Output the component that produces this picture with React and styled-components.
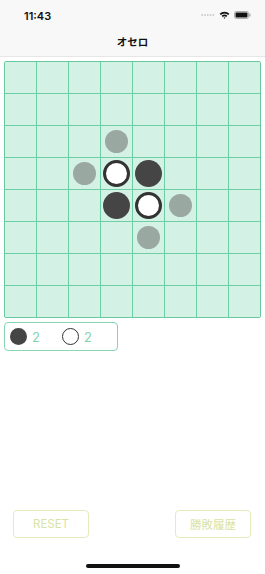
import React from "react";
import styled, { createGlobalStyle } from "styled-components";

const Global = createGlobalStyle`
  html, body { margin: 0; padding: 0; background: #ffffff; }
  body { font-family: "Noto Sans CJK JP", "Noto Sans", sans-serif; }
`;

const Page = styled.div`
  display: flex;
  flex-direction: column;
  width: 265px;
  height: 574px;
  overflow: hidden;
  background: #ffffff;
`;

const Header = styled.div`
  background: #f8f8f8;
  border-bottom: 1px solid #e6e6e6;
  height: 56px;
  display: flex;
  flex-direction: column;
`;

const StatusBar = styled.div`
  height: 30px;
  display: flex;
  align-items: center;
  justify-content: space-between;
  padding: 0 14px 0 24px;
  box-sizing: border-box;
`;

const Time = styled.span`
  font-family: "Inter", "Liberation Sans", sans-serif;
  font-weight: 600;
  font-size: 11px;
  color: #111;
  margin-top: 1px;
`;

const StatusIcons = styled.div`
  display: flex;
  align-items: center;
  gap: 4px;
`;

const Title = styled.div`
  flex: 1;
  display: flex;
  align-items: center;
  justify-content: center;
  font-weight: 700;
  font-size: 10.5px;
  color: #111;
  padding-bottom: 4px;
`;

const Board = styled.div`
  margin: 4px 0 0 4px;
  width: 257px;
  box-sizing: border-box;
  display: grid;
  grid-template-columns: repeat(8, 31px);
  grid-auto-rows: 31px;
  gap: 1px;
  background: #6ecfa4;
  border: 1px solid #68c99d;
  border-radius: 2px;
`;

const Cell = styled.div`
  background: #d3f1e4;
  display: flex;
  align-items: center;
  justify-content: center;
`;

const Stone = styled.div`
  box-sizing: border-box;
  border-radius: 50%;
  width: ${(p) => (p.$kind === "hint" ? 23 : 27)}px;
  height: ${(p) => (p.$kind === "hint" ? 23 : 27)}px;
  background: ${(p) =>
    p.$kind === "black" ? "#454545" : p.$kind === "white" ? "#ffffff" : "#9aa8a2"};
  border: ${(p) => (p.$kind === "white" ? "3px solid #333" : "none")};
`;

const ScoreBox = styled.div`
  margin: 4px 0 0 4px;
  width: 114px;
  height: 29px;
  box-sizing: border-box;
  border: 1px solid #86d6b2;
  border-radius: 4px;
  display: flex;
  align-items: center;
  padding-left: 5px;
`;

const ScoreItem = styled.div`
  display: flex;
  align-items: center;
  gap: 5px;
  width: 52px;
`;

const Disc = styled.div`
  box-sizing: border-box;
  width: 17px;
  height: 17px;
  border-radius: 50%;
  background: ${(p) => (p.$white ? "#fff" : "#454545")};
  border: ${(p) => (p.$white ? "1.5px solid #333" : "none")};
`;

const Count = styled.span`
  font-family: "Inter", "Liberation Sans", sans-serif;
  font-size: 13px;
  color: #7fd3ae;
`;

const Spacer = styled.div`
  flex: 1;
`;

const ButtonRow = styled.div`
  display: flex;
  justify-content: space-between;
  padding: 0 14px 0 13px;
`;

const Button = styled.button`
  width: 76px;
  height: 28px;
  box-sizing: border-box;
  background: transparent;
  border: 1px solid #e4ecbd;
  border-radius: 4px;
  color: #d8e3a6;
  font-family: "Inter", "Noto Sans CJK JP", sans-serif;
  font-size: 11.5px;
  padding: 0;
`;

const Footer = styled.div`
  height: 36px;
  display: flex;
  justify-content: center;
  padding-top: 26px;
  box-sizing: border-box;
`;

const HomeBar = styled.div`
  width: 94px;
  height: 4px;
  border-radius: 2px;
  background: #111;
`;

const initial = {
  "3,3": "white",
  "3,4": "black",
  "4,3": "black",
  "4,4": "white",
  "2,3": "hint",
  "3,2": "hint",
  "4,5": "hint",
  "5,4": "hint",
};

export default function App() {
  const cells = [];
  for (let r = 0; r < 8; r++) {
    for (let c = 0; c < 8; c++) {
      const k = initial[`${r},${c}`];
      cells.push(<Cell key={`${r}-${c}`}>{k && <Stone $kind={k} />}</Cell>);
    }
  }
  return (
    <Page>
      <Global />
      <Header>
        <StatusBar>
          <Time>11:43</Time>
          <StatusIcons>
            <svg width="14" height="4" viewBox="0 0 14 4">
              {[0, 1, 2, 3, 4].map((i) => (
                <circle key={i} cx={1.2 + i * 2.8} cy="2" r="0.9" fill="#c8c8c8" />
              ))}
            </svg>
            <svg width="11" height="8" viewBox="0 0 11 8">
              <path d="M0.6 2.8 A7 7 0 0 1 10.4 2.8 L9.2 4 A5.3 5.3 0 0 0 1.8 4 Z" fill="#111" />
              <path d="M2.6 4.8 A4.2 4.2 0 0 1 8.4 4.8 L7.2 6 A2.5 2.5 0 0 0 3.8 6 Z" fill="#111" />
              <path d="M4.5 6.7 A1.5 1.5 0 0 1 6.5 6.7 L5.5 7.8 Z" fill="#111" />
            </svg>
            <svg width="17" height="8" viewBox="0 0 17 8">
              <rect x="0.5" y="0.5" width="14" height="7" rx="1.8" fill="none" stroke="#999" strokeWidth="0.8" />
              <rect x="1.5" y="1.5" width="12" height="5" rx="1" fill="#111" />
              <rect x="15.3" y="2.6" width="1.2" height="2.8" rx="0.5" fill="#999" />
            </svg>
          </StatusIcons>
        </StatusBar>
        <Title>オセロ</Title>
      </Header>
      <Board>{cells}</Board>
      <ScoreBox>
        <ScoreItem>
          <Disc />
          <Count>2</Count>
        </ScoreItem>
        <ScoreItem>
          <Disc $white />
          <Count>2</Count>
        </ScoreItem>
      </ScoreBox>
      <Spacer />
      <ButtonRow>
        <Button>RESET</Button>
        <Button>勝敗履歴</Button>
      </ButtonRow>
      <Footer>
        <HomeBar />
      </Footer>
    </Page>
  );
}
